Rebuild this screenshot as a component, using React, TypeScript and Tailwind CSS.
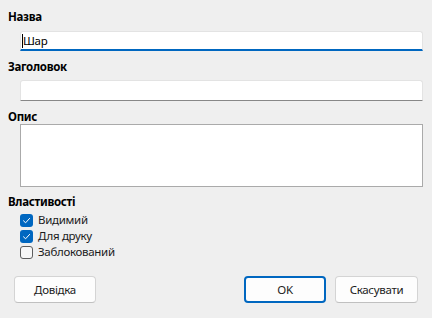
import { useState } from 'react'

function Check({ checked, label }: { checked: boolean; label: string }) {
  return (
    <label className="flex h-4 items-center">
      {checked ? (
        <span className="flex h-[13px] w-[13px] items-center justify-center rounded-[3px] bg-[#0067c0]">
          <svg width="9" height="9" viewBox="0 0 9 9" fill="none">
            <path d="M1.5 4.8 L3.6 6.8 L7.6 2.4" stroke="white" strokeWidth="1" strokeLinecap="round" strokeLinejoin="round" />
          </svg>
        </span>
      ) : (
        <span className="h-[13px] w-[13px] rounded-[3px] border border-[#5d5d5d] bg-[#f7f7f7]" />
      )}
      <span className="ml-[5px] text-[11.5px] leading-4 tracking-[-0.3px] text-[#1b1b1b]">{label}</span>
    </label>
  )
}

export default function App() {
  const [name] = useState('Шар')

  return (
    <div
      className="flex h-[318px] w-[432px] flex-col bg-[#efefef] text-black"
      style={{ fontFamily: '"Noto Sans", "Open Sans", sans-serif' }}
    >
      {/* Name */}
      <div className="ml-2 mt-[10px] h-[14px] text-[11.5px] font-bold leading-[14px] tracking-[-0.3px]">Назва</div>
      <div className="ml-5 mr-[9px] mt-[7px] flex h-5 items-center rounded-t-[3px] border border-b-2 border-[#e3e3e3] border-b-[#0067c0] bg-white pl-[1px]">
        <span className="h-[14px] w-px bg-black" />
        <span className="text-[11.5px] leading-4 tracking-[-0.3px]">{name}</span>
      </div>

      {/* Title */}
      <div className="ml-2 mt-[9px] h-[14px] text-[11.5px] font-bold leading-[14px] tracking-[-0.3px]">Заголовок</div>
      <div className="ml-5 mr-[9px] mt-[6px] h-[21px] rounded-t-[3px] border border-[#e3e3e3] border-b-[#878787] bg-white" />

      {/* Description */}
      <div className="ml-2 mt-[9px] h-[14px] text-[11.5px] font-bold leading-[14px] tracking-[-0.3px]">Опис</div>
      <div className="ml-5 mr-[9px] h-[63px] border border-[#aaaaaa] bg-white" />

      {/* Properties */}
      <div className="ml-2 mt-[8px] h-[14px] text-[11.5px] font-bold leading-[14px] tracking-[-0.3px]">Властивості</div>
      <div className="ml-5 mt-[3px] flex flex-col">
        <Check checked label="Видимий" />
        <Check checked label="Для друку" />
        <Check checked={false} label="Заблокований" />
      </div>

      {/* Buttons */}
      <div className="ml-[14px] mr-[14px] mt-4 flex text-[11.5px] tracking-[-0.3px] text-[#1b1b1b]">
        <button className="h-[27px] w-[82px] rounded-[4px] border border-[#d4d4d4] border-b-[#c0c0c0] bg-[#fdfdfd]">
          Довідка
        </button>
        <div className="flex-1" />
        <button className="h-[27px] w-[82px] rounded-[4px] border-2 border-[#0067c0] bg-[#fdfdfd]">
          OK
        </button>
        <button className="ml-[9px] h-[27px] w-[83px] rounded-[4px] border border-[#d4d4d4] border-b-[#c0c0c0] bg-[#fdfdfd]">
          Скасувати
        </button>
      </div>
    </div>
  )
}
